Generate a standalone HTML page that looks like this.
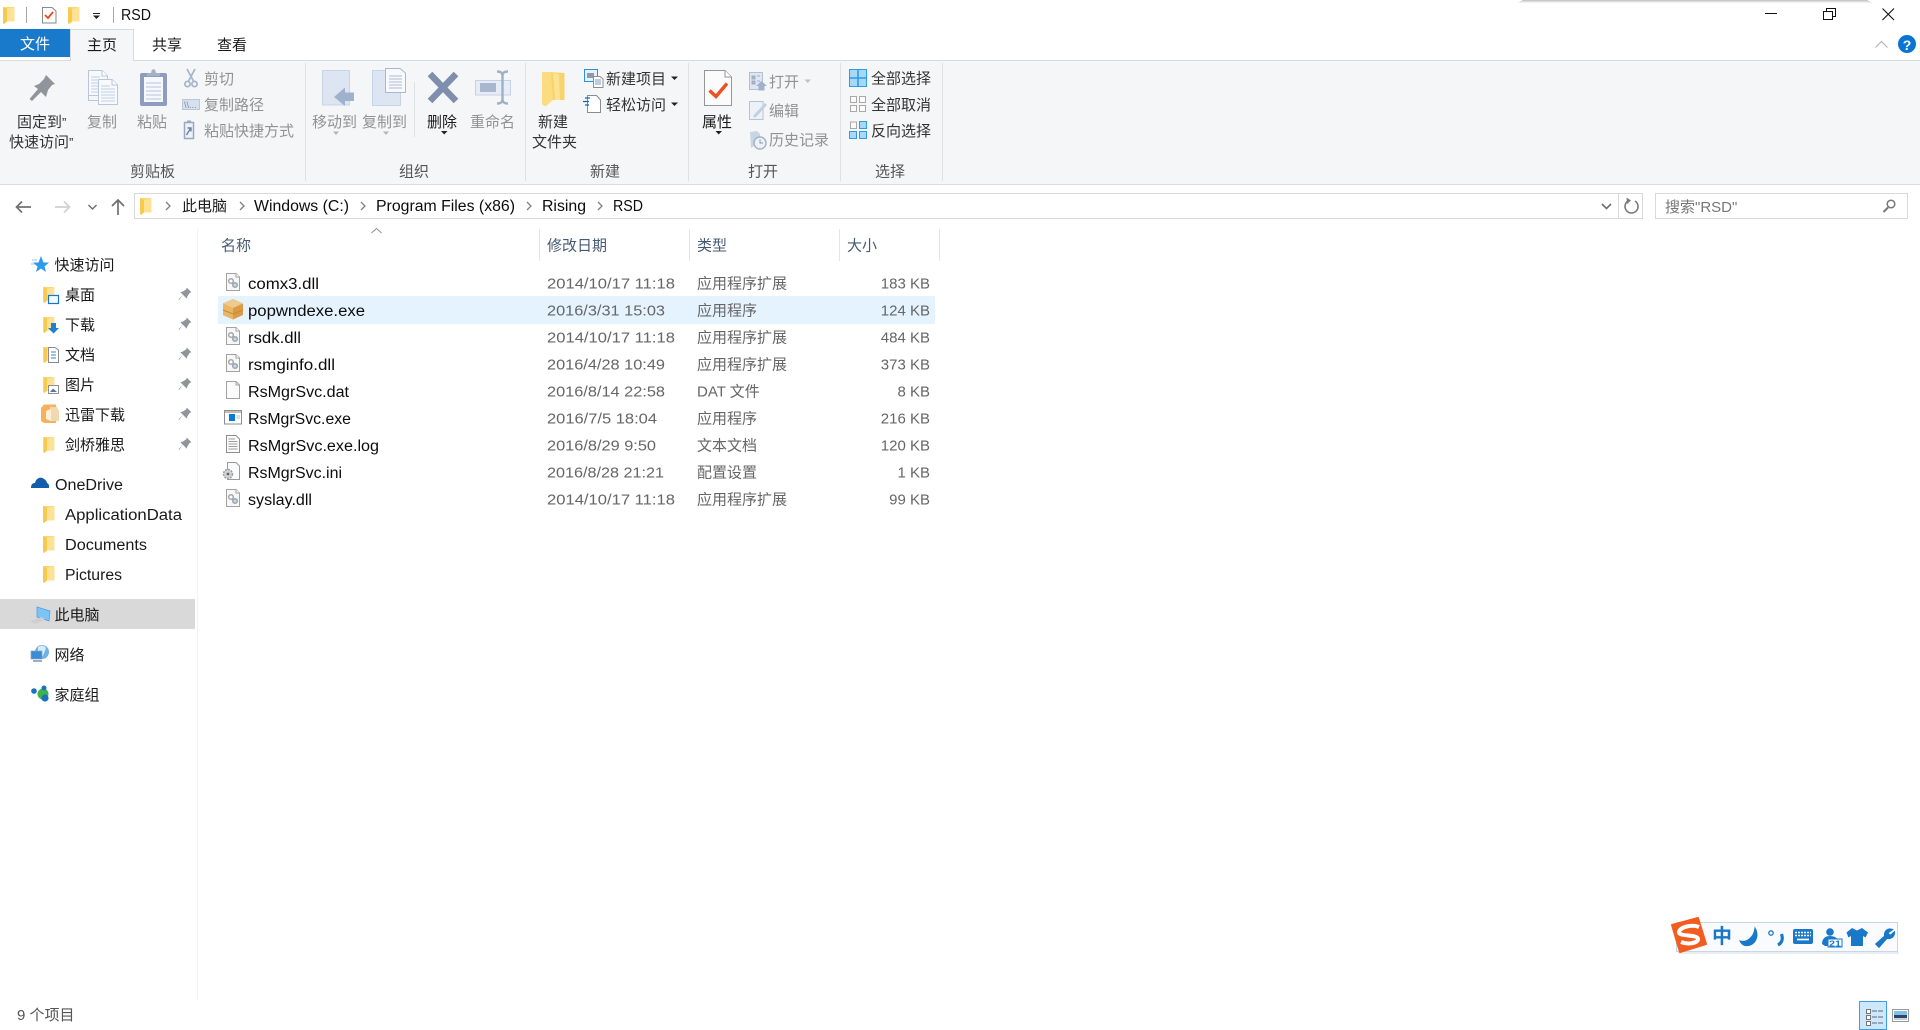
<!DOCTYPE html>
<html lang="zh-CN"><head><meta charset="utf-8"><title>RSD</title>
<style>
html,body{margin:0;padding:0;background:#fff;width:1920px;height:1030px;overflow:hidden}
svg{display:block}
text{font-family:"Liberation Sans","Noto Sans CJK SC",sans-serif;font-size:15px;fill:#333}
.d{fill:#929292}.g{fill:#555}.k{fill:#1a1a1a}
.f{font-size:15.5px;fill:#0c0c0c}
.m{font-size:15px;fill:#666}
.h{fill:#465a74}
</style></head><body>
<svg width="1920" height="1030" viewBox="0 0 1920 1030" xmlns="http://www.w3.org/2000/svg">
<defs>
<symbol id="folder" viewBox="0 0 12 18"><path d="M0 1H5L11.500 1V15.500H4L1 18L0 17Z" fill="#fad774"/><path d="M0 1L4 3V15.500L1 18L0 17Z" fill="#f6c94f"/><path d="M4 3L11.500 1V15.500H4Z" fill="#fde296"/></symbol>
<symbol id="pin" viewBox="0 0 12 12"><path d="M7.500 .5L11.500 4.500L10 5L8 8L7.500 10L2 4.500L4 4L7 2ZM4 7L1 11L.5 10.500Z" fill="#8f959a"/></symbol>
<symbol id="dll" viewBox="0 0 14 18"><path d="M.5.5H10L13.500 4V17.500H.5Z" fill="#f7f7f7" stroke="#a2a2a2"/><path d="M10 .5V4H13.500" fill="#fff" stroke="#a2a2a2"/><circle cx="5" cy="8" r="2.300" fill="#fff" stroke="#a6a6a6" stroke-width="1.500"/><circle cx="9" cy="12" r="2.300" fill="#cfd6e0" stroke="#97a6b8" stroke-width="1.500"/></symbol>
<symbol id="cdoc" viewBox="0 0 20 26"><path d="M.5.5H14L19.500 6V25.500H.5Z" fill="#f7f9fd" stroke="#b8c5dc"/><path d="M14 .5V6H19.500" fill="#fff" stroke="#b8c5dc"/><path d="M3 7H12M3 10H17M3 13H17M3 16H17M3 19H17M3 22H17" stroke="#c2cee2"/></symbol>
</defs>

<!-- title bar -->
<rect x="1522" y="0" width="346" height="1" fill="#c6c8c8"/><rect x="1520" y="1" width="350" height="1" fill="#dddede"/><rect x="1518" y="2" width="354" height="1" fill="#f1f1f1"/>
<use href="#folder" x="3" y="6" width="12" height="18"/>
<rect x="26" y="7" width="1" height="16" fill="#a8a8a8"/>
<path d="M42.500 7.500H52L56 11V23H42.500Z" fill="#fbfbfb" stroke="#8a8a8a"/><path d="M45 15L48 18L53 12" fill="none" stroke="#ec4a1e" stroke-width="1.800"/>
<use href="#folder" x="68" y="6" width="12" height="18"/>
<rect x="93" y="13" width="7" height="1" fill="#222"/><path d="M93 15.500H100L96.500 19Z" fill="#222"/>
<rect x="113" y="7" width="1" height="16" fill="#a8a8a8"/>
<text x="121" y="20" textLength="30" lengthAdjust="spacingAndGlyphs" style="font-size:15.500px;fill:#111">RSD</text>
<path d="M1765 13.500H1777" stroke="#111" stroke-width="1"/>
<path d="M1823.500 11.500H1832.500V19.500H1823.500ZM1826.500 11.500V8.500H1835.500V16.500H1832.500" fill="none" stroke="#111"/>
<path d="M1882.500 8.500L1894 20M1894 8.500L1882.500 20" stroke="#111" stroke-width="1.100"/>

<!-- tabs -->
<rect x="0" y="29" width="70" height="28" fill="#1979ca"/>
<path d="M70.500 60V29.500H133.500V60" fill="#f5f6f7" stroke="#d9dadb"/>
<rect x="0" y="60" width="1920" height="125" fill="#f5f6f7"/>
<rect x="0" y="60" width="71" height="1" fill="#d9dadb"/><rect x="133" y="60" width="1787" height="1" fill="#d9dadb"/>
<rect x="0" y="184" width="1920" height="1" fill="#dadbdc"/>
<rect x="71" y="58" width="62" height="3" fill="#f5f6f7"/>
<text x="20" y="49" style="fill:#fff">文件</text>
<text x="87" y="50" class="k">主页</text>
<text x="152" y="50" class="k">共享</text>
<text x="217" y="50" class="k">查看</text>
<path d="M1875.500 47.500L1881.500 41.500L1887.500 47.500" fill="none" stroke="#b5b5b5" stroke-width="1.200"/>
<circle cx="1907" cy="44" r="9" fill="#0a74d2"/><text x="1907" y="50" text-anchor="middle" style="font-size:14px;font-weight:bold;fill:#fff">?</text>

<!-- ribbon separators -->
<g fill="#dfe0e1"><rect x="305" y="63" width="1" height="118"/><rect x="525" y="63" width="1" height="118"/><rect x="688" y="63" width="1" height="118"/><rect x="840" y="63" width="1" height="118"/><rect x="942" y="63" width="1" height="118"/><rect x="414" y="82" width="1" height="55"/></g>

<!-- clipboard group -->
<path d="M46 75L55 84L52 85L48 90L46 97L41 92L32 101L29.500 99L38 89L34 86L39 84L44 79Z" fill="#8f959a"/>
<use href="#cdoc" x="88" y="70" width="20" height="26"/>
<path d="M88.500 96V100.500H98" fill="none" stroke="#b8c5dc"/>
<use href="#cdoc" x="98" y="79" width="20" height="26"/>
<rect x="140" y="73" width="27" height="33" rx="2" fill="#8e9dbd"/><rect x="144" y="77" width="19" height="25" fill="#f5f8fd"/>
<path d="M146 83H161M146 87H161M146 91H161M146 95H161M146 99H161" stroke="#ccd6e8" stroke-width="1.500"/>
<path d="M147 76V73H151L152 69.500H155L156 73H160V76Z" fill="#a4b1ca"/>
<g fill="none" stroke="#a8b5cd" stroke-width="1.800"><path d="M187 69L194 82M195 69L188 82"/><circle cx="187.500" cy="84" r="2.600"/><circle cx="194.500" cy="84" r="2.600"/></g>
<rect x="182.500" y="99.500" width="17" height="10" fill="#d8e0ee" stroke="#bac6dc"/><text x="184" y="108" style="font-size:9px;fill:#7d8aa3">\\...</text>
<rect x="184.500" y="122.500" width="9" height="16" fill="#eef2f8" stroke="#98a8c4" stroke-width="1.500"/><path d="M187 120.500H191V123H187Z" fill="#98a8c4"/><path d="M186.500 135L190.500 128.500M187.500 128H191V131.500" fill="none" stroke="#6b7f9f" stroke-width="1.400"/>
<text x="17" y="127">固定到<tspan style="font-size:13px">”</tspan></text>
<text x="9" y="147">快速访问<tspan style="font-size:13px">”</tspan></text>
<text x="87" y="127" class="d">复制</text><text x="137" y="127" class="d">粘贴</text>
<text x="204" y="84" class="d">剪切</text><text x="204" y="110" class="d">复制路径</text><text x="204" y="136" class="d">粘贴快捷方式</text>
<text x="130" y="176.500" class="g">剪贴板</text>

<!-- organise group -->
<path d="M322.500 70.500H349.500V105H322.500Z" fill="#dde5f2" stroke="#c8d4e6"/>
<path d="M334 97L345 87.500V92.500H354V101H345V106Z" fill="#9fb2cd"/>
<path d="M372.500 70.500H400.500V105.500H372.500Z" fill="#dde5f2" stroke="#c8d4e6"/>
<path d="M385.500 68.500H400L405.500 73V92.500H385.500Z" fill="#f7f9fd" stroke="#a9b8d1"/><path d="M389 76H402M389 79H402M389 82H402M389 85H402M389 88H402" stroke="#aebbd2"/>
<path d="M430 74L456 101M456 74L430 101" stroke="#7f8eac" stroke-width="6.500" fill="none"/>
<rect x="475.500" y="80.500" width="35" height="14.500" fill="#e6edf7" stroke="#c5d2e5"/><rect x="480" y="83" width="16" height="9" fill="#a8b7ce"/>
<path d="M497 71.500C501 71.500 502.500 73 502.500 76V99C502.500 102 501 103.500 497 103.500M508 71.500C504 71.500 502.500 73 502.500 76V99C502.500 102 504 103.500 508 103.500" fill="none" stroke="#9fb0cb" stroke-width="2.400"/>
<text x="312" y="127" class="d">移动到</text><text x="362" y="127" class="d">复制到</text><text x="427" y="127" class="k">删除</text><text x="470" y="127" class="d">重命名</text>
<path d="M333 131.500H339L336 135Z" fill="#b5b5b5"/><path d="M383 131.500H389L386 135Z" fill="#b5b5b5"/><path d="M441 131H447.500L444.200 134.500Z" fill="#222"/>
<text x="399" y="176.500" class="g">组织</text>

<!-- new group -->
<path d="M542 72H553L564.500 73V100H550L546 106H544L542 104Z" fill="#fbdc84"/><path d="M542 72L551 77L553 100L546 106L542 104Z" fill="#fbdc80"/><path d="M551 73H564.500V100H553Z" fill="#f8d26c"/><path d="M553 73L559 74L560 100H555Z" fill="#fde391"/>
<rect x="584.500" y="69.500" width="13" height="12" fill="#e8f1fa" stroke="#2f8fd8"/><rect x="587" y="73" width="7" height="5" fill="#8d9bb0"/>
<path d="M593.500 76.500H600L603 79V87.500H593.500Z" fill="#fff" stroke="#8c8c8c"/><path d="M595 80H601M595 82H601M595 84H601" stroke="#7a9ac2"/>
<path d="M587.500 96V112.500H600.500V100L596.500 95.500H587.500Z" fill="#fff" stroke="#8c8c8c"/>
<path d="M585 98H590M583 101.500H589M585 105H589" stroke="#1668b8" stroke-width="1.200"/>
<path d="M671 76.500H678L674.500 80Z" fill="#222"/><path d="M671 102.500H678L674.500 106Z" fill="#222"/>
<text x="538" y="127">新建</text><text x="532" y="147">文件夹</text>
<text x="606" y="84">新建项目</text><text x="606" y="110">轻松访问</text>
<text x="590" y="176.500" class="g">新建</text>

<!-- open group -->
<path d="M704.500 70.500H725L731.500 77V105.500H704.500Z" fill="#fbfbfb" stroke="#979797"/><path d="M725 70.500V77H731.500" fill="#fff" stroke="#979797"/>
<path d="M709.500 90.500L716 96.500L727 83.500" fill="none" stroke="#ee5022" stroke-width="3.400"/>
<text x="702" y="127" class="k">属性</text><path d="M715.500 131H722L718.700 134.500Z" fill="#222"/>
<rect x="749.500" y="72.500" width="13" height="17" fill="#dfe6f0" stroke="#b3c0d4"/><path d="M752 76H755V79H752ZM752 81H755V84H752ZM757 76H760M757 81H760" stroke="#9fadc4" fill="#a6b4ca"/><path d="M756 86L761.500 81L767 86H764.500V90.500H758.500V86Z" fill="#9fb2cd"/>
<path d="M749.500 101.500H763V119.500H749.500Z" fill="#edf2f9" stroke="#b6c3d6"/><path d="M753 116L765 103L767 105L755 118Z" fill="#c2cfe0"/>
<path d="M750 132L757 131L760 134V146H754L751 148Z" fill="#c9d4e4"/><circle cx="760" cy="143" r="6" fill="#eef2f7" stroke="#a5b3c8" stroke-width="1.500"/><path d="M760 139.500V143H763" fill="none" stroke="#8596b0"/>
<text x="769" y="87" class="d">打开</text><path d="M804.500 79.500H811L807.700 83Z" fill="#c0c0c0"/>
<text x="769" y="116" class="d">编辑</text><text x="769" y="145" class="d">历史记录</text>
<text x="748" y="176.500" class="g">打开</text>

<!-- select group -->
<rect x="849.500" y="69.500" width="17" height="17" fill="#a6d8f8" stroke="#2f9be6"/><path d="M858 70V86M850 78H866" stroke="#2f9be6" stroke-width="1.600"/>
<path d="M850.500 96.500H856.500V102.500H850.500ZM859.500 96.500H865.500V102.500H859.500ZM850.500 105.500H856.500V111.500H850.500ZM859.500 105.500H865.500V111.500H859.500Z" fill="#fbfbfb" stroke="#a8a8a8"/>
<path d="M850.500 122H856.500V128.500H850.500Z" fill="#fbfbfb" stroke="#a8a8a8"/><path d="M859.500 121.500H866.500V128.500H859.500ZM849.500 131.500H856.500V138.500H849.500ZM859.500 131.500H866.500V138.500H859.500Z" fill="#a6d8f8" stroke="#2f9be6"/>
<text x="871" y="83.500">全部选择</text><text x="871" y="110">全部取消</text><text x="871" y="136">反向选择</text>
<text x="875" y="176.500" class="g">选择</text>

<!-- address row -->
<path d="M16.500 207H31M22 201.500L16.500 207L22 212.500" fill="none" stroke="#707070" stroke-width="1.700"/>
<path d="M55 207H69.500M64 201.500L69.500 207L64 212.500" fill="none" stroke="#d0d0d0" stroke-width="1.700"/>
<path d="M88.500 205L92.500 209L96.500 205" fill="none" stroke="#707070" stroke-width="1.500"/>
<path d="M118 215V200M112 206L118 200L124 206" fill="none" stroke="#707070" stroke-width="1.700"/>
<rect x="134.500" y="193.500" width="1508" height="25" fill="#fff" stroke="#d9d9d9"/>
<rect x="1618" y="194" width="1" height="24" fill="#d9d9d9"/>
<rect x="1655.500" y="193.500" width="252" height="25" fill="#fff" stroke="#d9d9d9"/>
<use href="#folder" x="140" y="197" width="12" height="18"/>
<g fill="none" stroke="#808080" stroke-width="1.300"><path d="M166 202L170 206L166 210"/><path d="M240 202L244 206L240 210"/><path d="M361 202L365 206L361 210"/><path d="M527 202L531 206L527 210"/><path d="M598 202L602 206L598 210"/></g>
<text x="182" y="211" class="k">此电脑</text>
<text x="254" y="211" class="f" textLength="95" lengthAdjust="spacingAndGlyphs">Windows (C:)</text>
<text x="376" y="211" class="f" textLength="139" lengthAdjust="spacingAndGlyphs">Program Files (x86)</text>
<text x="542" y="211" class="f" textLength="44" lengthAdjust="spacingAndGlyphs">Rising</text>
<text x="613" y="211" class="f" textLength="30" lengthAdjust="spacingAndGlyphs">RSD</text>
<path d="M1602 204L1606.500 208.500L1611 204" fill="none" stroke="#6e6e6e" stroke-width="1.600"/>
<path d="M1635 201A6.500 6.500 0 1 1 1629 200.500" fill="none" stroke="#7a7a7a" stroke-width="1.600"/><path d="M1626.500 197.500L1631 200.500L1627 204Z" fill="#7a7a7a"/>
<text x="1665" y="212" style="fill:#777">搜索"RSD"</text>
<circle cx="1891" cy="204" r="3.800" fill="none" stroke="#777" stroke-width="1.500"/><path d="M1888 207.500L1883.500 212" stroke="#777" stroke-width="2"/>

<!-- sidebar -->
<rect x="197" y="229" width="1" height="771" fill="#f3f3f3"/>
<rect x="0" y="599" width="195" height="30" fill="#d9d9d9"/>
<path d="M41 256L43.500 262.500H49L44.500 266.500L46 272L41 268.500L36 272L37.500 266.500L33 262.500H38.500Z" fill="#2b9af0"/><path d="M32 260H37M31 264H35" stroke="#8ccbf7"/>
<text x="54.500" y="270" class="k">快速访问</text>
<g id="favs">
<use href="#folder" x="43" y="286" width="12" height="17"/><rect x="48.500" y="295.500" width="10" height="8" fill="#f3f9ff" stroke="#1875c8" stroke-width="1.200"/>
<use href="#folder" x="43" y="316" width="12" height="17"/><path d="M51 323H56V328H59L53.500 333.500L48 328H51Z" fill="#1f80d6"/>
<use href="#folder" x="43" y="346" width="12" height="17"/><path d="M48.500 347.500H55L58.500 350V362.500H48.500Z" fill="#fff" stroke="#8a8a8a"/><path d="M51 352H56M51 355H56M51 358H56" stroke="#3a86cc"/>
<use href="#folder" x="43" y="376" width="12" height="17"/><rect x="48.500" y="385.500" width="10" height="8" fill="#fff" stroke="#909090"/><path d="M50 392L53 388.500L57 392Z" fill="#54799c"/>
<path d="M41 408L44 404.500H56V423H44L41 421Z" fill="#f5b25a"/><path d="M50 407H57L59 411V421H50Z" fill="#f0d8b0"/><path d="M46 411V419L51 421V409Z" fill="#fdf0d8"/>
<use href="#folder" x="43" y="436" width="12" height="17"/>
</g>
<text x="65" y="300" class="k">桌面</text><text x="65" y="330" class="k">下载</text><text x="65" y="360" class="k">文档</text><text x="65" y="390" class="k">图片</text><text x="65" y="420" class="k">迅雷下载</text><text x="65" y="450" class="k">剑桥雅思</text>
<use href="#pin" x="178" y="287" width="14" height="14"/><use href="#pin" x="178" y="317" width="14" height="14"/><use href="#pin" x="178" y="347" width="14" height="14"/><use href="#pin" x="178" y="377" width="14" height="14"/><use href="#pin" x="178" y="407" width="14" height="14"/><use href="#pin" x="178" y="437" width="14" height="14"/>
<path d="M31 488C31 484 33 483 35 483C36 478 41 476 44 479C46 480 47 482 47 483C49 484 49.500 486 49 488Z" fill="#115eaa"/>
<text x="55" y="490" class="f" style="fill:#1a1a1a" textLength="68" lengthAdjust="spacingAndGlyphs">OneDrive</text>
<use href="#folder" x="43" y="505" width="12" height="18"/><use href="#folder" x="43" y="535" width="12" height="18"/><use href="#folder" x="43" y="565" width="12" height="18"/>
<text x="65" y="520" class="f" style="fill:#1a1a1a" textLength="117" lengthAdjust="spacingAndGlyphs">ApplicationData</text>
<text x="65" y="550" class="f" style="fill:#1a1a1a" textLength="82" lengthAdjust="spacingAndGlyphs">Documents</text>
<text x="65" y="580" class="f" style="fill:#1a1a1a" textLength="57" lengthAdjust="spacingAndGlyphs">Pictures</text>
<path d="M37 607L50 611L49 621L37 617Z" fill="#7cc4f5" stroke="#4f9ad8" stroke-width=".7"/><path d="M30 621L42 617L45 620L35 624Z" fill="#cfcfcf"/>
<text x="54.500" y="620" class="k">此电脑</text>
<circle cx="42" cy="652" r="7" fill="#6fb2e6"/><path d="M38 647C41 645 44 645 46 648L43 656L38 653Z" fill="#d7ecfa"/><rect x="31" y="651" width="11" height="8" fill="#3a8cd4" stroke="#8aa7c0" stroke-width=".7"/><path d="M33 661H42" stroke="#9ab0c4" stroke-width="2"/>
<text x="54.500" y="660" class="k">网络</text>
<circle cx="43" cy="694" r="5.500" fill="#3cb44a"/><circle cx="34" cy="691" r="2.800" fill="#1c6fc2"/><circle cx="44" cy="688" r="2.500" fill="#1c6fc2"/><circle cx="45" cy="698" r="3.600" fill="#1c6fc2"/>
<text x="54.500" y="700" class="k">家庭组</text>

<!-- column headers -->
<path d="M371.500 233L376.500 228.500L381.500 233" fill="none" stroke="#8d8d8d"/>
<g fill="#e5e5e5"><rect x="539" y="229" width="1" height="32"/><rect x="689" y="229" width="1" height="32"/><rect x="839" y="229" width="1" height="32"/><rect x="939" y="229" width="1" height="32"/></g>
<text x="221" y="250.500" class="h">名称</text><text x="547" y="250.500" class="h">修改日期</text><text x="697" y="250.500" class="h">类型</text><text x="847" y="250.500" class="h">大小</text>

<!-- rows -->
<rect x="218" y="296" width="717" height="28" fill="#e5f3ff"/>
<use href="#dll" x="226" y="273" width="14" height="18"/>
<path d="M233 299L243 303.500V315L233 319.500L223 315V303.500Z" fill="#d99b45"/><path d="M233 299L243 303.500L233 308L223 303.500Z" fill="#eecb8c"/><path d="M223 303.500L233 308V319.500L223 315Z" fill="#e9b666"/><path d="M223 310L233 314L243 310" fill="none" stroke="#c9893a"/>
<use href="#dll" x="226" y="327" width="14" height="18"/>
<use href="#dll" x="226" y="354" width="14" height="18"/>
<path d="M226.500 381.500H236L239.500 385V398.500H226.500Z" fill="#fbfbfb" stroke="#a2a2a2"/><path d="M236 381.500V385H239.500" fill="none" stroke="#a2a2a2"/>
<rect x="224.500" y="410.500" width="17" height="13.500" fill="#fff" stroke="#8f8f8f"/><rect x="225" y="411" width="16" height="2" fill="#bdbdbd"/><rect x="229" y="414" width="6" height="7" fill="#0a78d7"/><path d="M236.500 416H240M236.500 418H240" stroke="#bbb"/>
<path d="M226.500 435.500H236L239.500 439V452.500H226.500Z" fill="#fbfbfb" stroke="#8f8f8f"/><path d="M228.500 439H235M228.500 441.500H237.500M228.500 444H237.500M228.500 446.500H237.500M228.500 449H237.500" stroke="#9c9c9c"/>
<path d="M227.500 462.500H236L239.500 466V479.500H227.500Z" fill="#fbfbfb" stroke="#9a9a9a"/><circle cx="228" cy="474" r="4.500" fill="#d0d3d6" stroke="#9ba0a6" stroke-width="1.500" stroke-dasharray="2 1"/><circle cx="228" cy="474" r="1.400" fill="#666"/>
<use href="#dll" x="226" y="489" width="14" height="18"/>

<g>
<text x="248" y="289" class="f" textLength="71" lengthAdjust="spacingAndGlyphs">comx3.dll</text>
<text x="248" y="316" class="f" textLength="117" lengthAdjust="spacingAndGlyphs">popwndexe.exe</text>
<text x="248" y="343" class="f" textLength="53" lengthAdjust="spacingAndGlyphs">rsdk.dll</text>
<text x="248" y="370" class="f" textLength="87" lengthAdjust="spacingAndGlyphs">rsmginfo.dll</text>
<text x="248" y="397" class="f" textLength="101" lengthAdjust="spacingAndGlyphs">RsMgrSvc.dat</text>
<text x="248" y="424" class="f" textLength="103" lengthAdjust="spacingAndGlyphs">RsMgrSvc.exe</text>
<text x="248" y="451" class="f" textLength="131" lengthAdjust="spacingAndGlyphs">RsMgrSvc.exe.log</text>
<text x="248" y="478" class="f" textLength="94" lengthAdjust="spacingAndGlyphs">RsMgrSvc.ini</text>
<text x="248" y="505" class="f" textLength="64" lengthAdjust="spacingAndGlyphs">syslay.dll</text>
</g>
<g>
<text x="547" y="288.500" class="m" textLength="128" lengthAdjust="spacingAndGlyphs">2014/10/17 11:18</text>
<text x="547" y="315.500" class="m" textLength="118" lengthAdjust="spacingAndGlyphs">2016/3/31 15:03</text>
<text x="547" y="342.500" class="m" textLength="128" lengthAdjust="spacingAndGlyphs">2014/10/17 11:18</text>
<text x="547" y="369.500" class="m" textLength="118" lengthAdjust="spacingAndGlyphs">2016/4/28 10:49</text>
<text x="547" y="396.500" class="m" textLength="118" lengthAdjust="spacingAndGlyphs">2016/8/14 22:58</text>
<text x="547" y="423.500" class="m" textLength="110" lengthAdjust="spacingAndGlyphs">2016/7/5 18:04</text>
<text x="547" y="450.500" class="m" textLength="109" lengthAdjust="spacingAndGlyphs">2016/8/29 9:50</text>
<text x="547" y="477.500" class="m" textLength="117" lengthAdjust="spacingAndGlyphs">2016/8/28 21:21</text>
<text x="547" y="504.500" class="m" textLength="128" lengthAdjust="spacingAndGlyphs">2014/10/17 11:18</text>
</g>
<g>
<text x="697" y="288.500" class="m">应用程序扩展</text>
<text x="697" y="315.500" class="m">应用程序</text>
<text x="697" y="342.500" class="m">应用程序扩展</text>
<text x="697" y="369.500" class="m">应用程序扩展</text>
<text x="697" y="396.500" class="m">DAT 文件</text>
<text x="697" y="423.500" class="m">应用程序</text>
<text x="697" y="450.500" class="m">文本文档</text>
<text x="697" y="477.500" class="m">配置设置</text>
<text x="697" y="504.500" class="m">应用程序扩展</text>
</g>
<g text-anchor="end">
<text x="930" y="288.500" class="m">183 KB</text>
<text x="930" y="315.500" class="m">124 KB</text>
<text x="930" y="342.500" class="m">484 KB</text>
<text x="930" y="369.500" class="m">373 KB</text>
<text x="930" y="396.500" class="m">8 KB</text>
<text x="930" y="423.500" class="m">216 KB</text>
<text x="930" y="450.500" class="m">120 KB</text>
<text x="930" y="477.500" class="m">1 KB</text>
<text x="930" y="504.500" class="m">99 KB</text>
</g>

<!-- status bar -->
<text x="17" y="1020" class="g">9 个项目</text>
<rect x="1859.500" y="1001.500" width="27" height="28" fill="#cce8ff" stroke="#3e9de6"/>
<path d="M1866.500 1009.500H1870.500V1013.500H1866.500ZM1866.500 1015.500H1870.500V1019.500H1866.500ZM1866.500 1021.500H1870.500V1025.500H1866.500Z" fill="#fff" stroke="#777"/>
<path d="M1872 1011H1883M1872 1017H1883M1872 1023H1883" stroke="#666" stroke-dasharray="5 1"/>
<rect x="1892.500" y="1009.500" width="16" height="12" fill="#fff" stroke="#9a9a9a"/><rect x="1894" y="1011" width="13" height="4" fill="#7fc0ec"/><rect x="1894" y="1015" width="13" height="3" fill="#33455e"/><rect x="1894" y="1018" width="13" height="2" fill="#b9d4e8"/>

<!-- IME bar -->
<rect x="1678" y="952" width="221" height="2" fill="#e9edf2"/>
<rect x="1676.500" y="922.500" width="221" height="29" fill="#f9fbfe" stroke="#c7d6e8"/>
<path d="M1672 925L1698 918L1706 944L1680 952Z" fill="#f25c1f" stroke="#f25c1f" stroke-width="2" stroke-linejoin="round"/>
<path d="M1699 927C1692 924 1680 927 1679 932C1678 937 1698 934 1698 939C1698 943 1688 945 1681 942" fill="none" stroke="#fff" stroke-width="4"/>
<text x="1712" y="943" style="font-size:20px;font-weight:bold;fill:#1a78c8">中</text>
<path d="M1755 928C1760 936 1755 947 1745 945.500C1743 945 1741 943 1740 941C1747 943 1754 937 1755 928Z" fill="#1a78c8" stroke="#1a78c8"/>
<circle cx="1771" cy="933" r="2.200" fill="none" stroke="#1a78c8" stroke-width="1.300"/><path d="M1781.500 934C1783.500 940 1781.500 943 1778 945" fill="none" stroke="#1a78c8" stroke-width="3.200"/>
<rect x="1793" y="929" width="20" height="15" rx="2" fill="#1a78c8"/><path d="M1795 932.500H1811M1795 935.500H1811" stroke="#fff" stroke-dasharray="2 1" stroke-width="1.500"/><path d="M1797 939.500H1809" stroke="#fff" stroke-width="1.700"/>
<circle cx="1830" cy="932" r="3.800" fill="#1a78c8"/><path d="M1822 944C1822 938 1826 936 1830 936C1834 936 1838 938 1838 941V946H1825Z" fill="#1a78c8"/>
<rect x="1828" y="939" width="14" height="8" fill="#fff" stroke="#1a78c8"/><text x="1829" y="946.500" style="font-size:8px;font-weight:bold;fill:#1a78c8" textLength="12" lengthAdjust="spacingAndGlyphs">21</text>
<path d="M1852 928L1857 930.500L1862 928L1868 932.500L1865.500 937.500L1863 936V946H1851V936L1848.500 937.500L1846.500 932.500Z" fill="#1a78c8"/>
<path d="M1893 929.500C1887.500 927 1883.500 931.500 1884.500 936L1875.500 944L1879 947.500L1887 938.500C1891.500 939.500 1895.500 936 1894.500 931.500L1890.500 935L1888 933Z" fill="#1a78c8" stroke="#1a78c8" stroke-width=".8"/>
</svg>
</body></html>
